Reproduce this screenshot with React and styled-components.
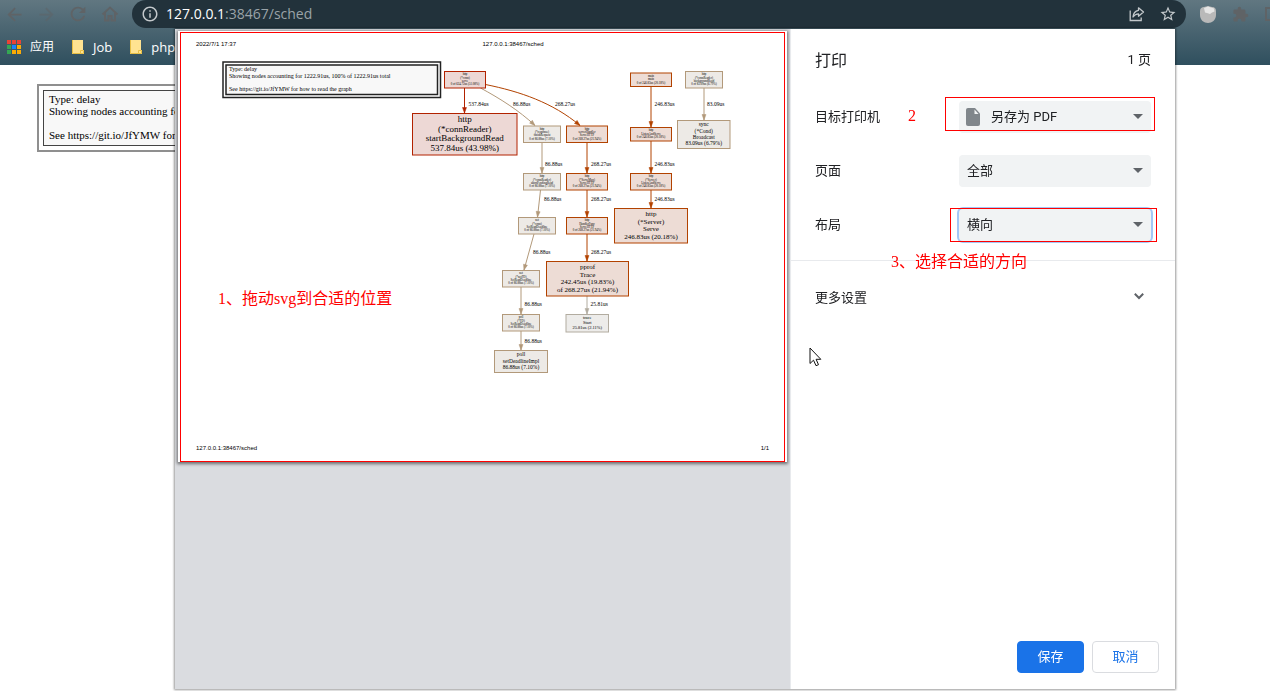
import { useState } from 'react';
import styled, { createGlobalStyle } from 'styled-components';
import { MdArrowBack, MdArrowForward, MdRefresh, MdInfoOutline, MdStarBorder, MdExtension } from 'react-icons/md';

const RED = '#b22200';
const ORANGE = '#b24200';
const TAN = '#b2997a';
const GREY = '#b2aca0';

const fills = {
  [RED]: '#edd8d5',
  [ORANGE]: '#eddcd5',
  [TAN]: '#edeae6',
  [GREY]: '#edecea'
}

// drawing units are half a pixel at the default preview size
const nodes = [
  { x: 889, y: 143, w: 82, h: 33, color: RED, size: 6, lines: ['http', '(*conn)', 'serve', '0 of 624.72us (51.08%)'] },
  { x: 825, y: 227, w: 209, h: 83, color: RED, size: 18, lines: ['http', '(*connReader)', 'startBackgroundRead', '537.84us (43.98%)'] },
  { x: 1047, y: 252, w: 74, h: 33, color: TAN, size: 6, lines: ['http', '(*response)', 'finishRequest', '0 of 86.88us (7.10%)'] },
  { x: 1133, y: 252, w: 82, h: 33, color: ORANGE, size: 6, lines: ['http', 'serverHandler', 'ServeHTTP', '0 of 268.27us (21.94%)'] },
  { x: 1261, y: 146, w: 82, h: 27, color: ORANGE, size: 6, lines: ['main', 'main', '0 of 246.83us (20.18%)'] },
  { x: 1371, y: 143, w: 74, h: 33, color: TAN, size: 6, lines: ['http', '(*connReader)', 'backgroundRead', '0 of 83.09us (6.79%)'] },
  { x: 1261, y: 255, w: 82, h: 27, color: ORANGE, size: 6, lines: ['http', 'ListenAndServe', '0 of 246.83us (20.18%)'] },
  { x: 1355, y: 241, w: 105, h: 56, color: TAN, size: 11, lines: ['sync', '(*Cond)', 'Broadcast', '83.09us (6.79%)'] },
  { x: 1047, y: 347, w: 74, h: 33, color: TAN, size: 6, lines: ['http', '(*connReader)', 'abortPendingRead', '0 of 86.88us (7.10%)'] },
  { x: 1133, y: 347, w: 82, h: 33, color: ORANGE, size: 6, lines: ['http', '(*ServeMux)', 'ServeHTTP', '0 of 268.27us (21.94%)'] },
  { x: 1261, y: 347, w: 82, h: 33, color: ORANGE, size: 6, lines: ['http', '(*Server)', 'ListenAndServe', '0 of 246.83us (20.18%)'] },
  { x: 1037, y: 435, w: 74, h: 33, color: TAN, size: 6, lines: ['net', '(*conn)', 'SetReadDeadline', '0 of 86.88us (7.10%)'] },
  { x: 1133, y: 435, w: 82, h: 33, color: ORANGE, size: 6, lines: ['http', 'HandlerFunc', 'ServeHTTP', '0 of 268.27us (21.94%)'] },
  { x: 1229, y: 417, w: 146, h: 69, color: ORANGE, size: 14, lines: ['http', '(*Server)', 'Serve', '246.83us (20.18%)'] },
  { x: 1005, y: 541, w: 74, h: 33, color: TAN, size: 6, lines: ['net', '(*netFD)', 'SetReadDeadline', '0 of 86.88us (7.10%)'] },
  { x: 1093, y: 523, w: 164, h: 69, color: ORANGE, size: 14, lines: ['pprof', 'Trace', '242.45us (19.83%)', 'of 268.27us (21.94%)'] },
  { x: 1005, y: 629, w: 74, h: 33, color: TAN, size: 6, lines: ['poll', '(*FD)', 'SetReadDeadline', '0 of 86.88us (7.10%)'] },
  { x: 1132, y: 629, w: 85, h: 35, color: GREY, size: 9, lines: ['trace', 'Start', '25.81us (2.11%)'] },
  { x: 989, y: 701, w: 106, h: 44, color: TAN, size: 11, lines: ['poll', 'setDeadlineImpl', '86.88us (7.10%)'] },
];

const edges = [
  { points: [[929, 176], [929, 226]], color: RED, label: '537.84us', at: [937, 208] },
  { points: [[961, 176], [1000, 197], [1038, 221], [1070, 251]], color: TAN, label: '86.88us', at: [1026, 208] },
  { points: [[971, 169], [1040, 183], [1105, 205], [1160, 251]], color: ORANGE, label: '268.27us', at: [1110, 208] },
  { points: [[1302, 173], [1302, 254]], color: ORANGE, label: '246.83us', at: [1309, 208] },
  { points: [[1408, 176], [1408, 240]], color: TAN, label: '83.09us', at: [1414, 208] },
  { points: [[1084, 285], [1084, 346]], color: TAN, label: '86.88us', at: [1090, 328] },
  { points: [[1174, 285], [1174, 346]], color: ORANGE, label: '268.27us', at: [1182, 328] },
  { points: [[1302, 282], [1302, 346]], color: ORANGE, label: '246.83us', at: [1309, 328] },
  { points: [[1081, 380], [1075, 434]], color: TAN, label: '86.88us', at: [1088, 398] },
  { points: [[1174, 380], [1174, 434]], color: ORANGE, label: '268.27us', at: [1182, 398] },
  { points: [[1302, 380], [1302, 416]], color: ORANGE, label: '246.83us', at: [1309, 398] },
  { points: [[1068, 468], [1048, 540]], color: TAN, label: '86.88us', at: [1066, 504] },
  { points: [[1174, 468], [1174, 522]], color: ORANGE, label: '268.27us', at: [1182, 504] },
  { points: [[1042, 574], [1042, 628]], color: TAN, label: '86.88us', at: [1049, 608] },
  { points: [[1174, 592], [1174, 628]], color: GREY, label: '25.81us', at: [1181, 608] },
  { points: [[1042, 662], [1042, 700]], color: TAN, label: '86.88us', at: [1049, 682] },
];

const Node = ({ x, y, w, h, color, size, lines }) => {
  const step = (h - 6) / lines.length;
  return (
    <g>
      <rect x={x} y={y} width={w} height={h} fill={fills[color]} stroke={color} strokeWidth="2" />
      {lines.map((line, i) => (
        <text key={i} x={x + w / 2} y={y + 2 + step * (i + 0.5) + size * 0.32} fontSize={size} textAnchor="middle">{line}</text>
      ))}
    </g>
  )
}

const Edge = ({ points, color, label, at }) => {
  const [ex, ey] = points[points.length - 1];
  const [px, py] = points[points.length - 2];
  const angle = Math.atan2(ey - py, ex - px) * 180 / Math.PI;
  const [start, ...rest] = points;
  return (
    <g>
      <path d={`M${start.join(',')}${rest.length > 1 ? 'C' : 'L'}${rest.map(p => p.join(',')).join(' ')}`} fill="none" stroke={color} strokeWidth="2" />
      <polygon points="0,0 -11,-4 -11,4" fill={color} stroke={color} transform={`translate(${ex} ${ey}) rotate(${angle})`} />
      <text x={at[0]} y={at[1] + 4} fontSize="11">{label}</text>
    </g>
  )
}

const CallGraph = () => (
  <Graph viewBox="356 114 1218 740" role="img" aria-label="sched">
    <rect x="446" y="124" width="435" height="71" fill="#fff" stroke="#222" strokeWidth="3" />
    <rect x="452" y="130" width="423" height="59" fill="#f8f8f8" stroke="#222" strokeWidth="3" />
    <text x="458" y="142" fontSize="12">Type: delay</text>
    <text x="458" y="156" fontSize="12">Showing nodes accounting for 1222.91us, 100% of 1222.91us total</text>
    <text x="458" y="182" fontSize="12">See https://git.io/JfYMW for how to read the graph</text>
    {edges.map((edge, i) => <Edge key={i} {...edge} />)}
    {nodes.map((node, i) => <Node key={i} {...node} />)}
  </Graph>
)

const HomeIcon = () => (
  <svg width="18" height="18" viewBox="0 0 18 18" fill="none" stroke="currentColor" strokeWidth="2">
    <path d="M1.500 9.500 9 2.500l7.500 7M4 8v7.500h3.500v-4.500h3v4.500H14V8" />
  </svg>
)

const ShareIcon = () => (
  <svg width="16" height="16" viewBox="0 0 16 16" fill="none" stroke="currentColor" strokeWidth="1.300">
    <path d="M1.200 4.500v10h11v-3" />
    <path d="M9.500 1.800 14.500 6l-5 4.200V7.800C7 7.800 5.400 8.800 4 11c.3-3.800 2.300-6.200 5.500-6.700z" strokeLinejoin="round" />
  </svg>
)

const BallIcon = () => (
  <svg width="16" height="17" viewBox="0 0 16 17">
    <path d="M0 5C0 2 2 1 4 1l4-1 4 1c3 0 4 2 4 4v4c0 5-4 8-8 8S0 14 0 9z" fill="#b9b9b9" />
    <path d="M4 2l4-1.500 3 1 3 1 .5 3-2.500 1-2 1.500-3-1-2-.5z" fill="#e6e6e6" />
  </svg>
)

const FileIcon = () => (
  <svg width="14" height="18" viewBox="0 0 14 18">
    <path d="M2 0h7l5 5.500V16a2 2 0 0 1-2 2H2a2 2 0 0 1-2-2V2a2 2 0 0 1 2-2z" fill="#80868b" />
    <path d="M8.500 1.500V6h4z" fill="#f1f3f4" />
  </svg>
)

const Folder = () => (
  <svg width="12" height="14" viewBox="0 0 12 14">
    <path d="M0 0h11v10h1v4H0z" fill="#ffe391" />
    <path d="M.5 0v13.500h8V10.500h3v3h-3" fill="none" stroke="#e8bf45" />
  </svg>
)

const dots = ['#ea4335', '#ea4335', '#ea4335', '#34a853', '#1a84ff', '#fbab05', '#34a853', '#fbab05', '#fbab05'];

const Apps = () => (
  <svg width="14" height="14" viewBox="0 0 14 14">
    {dots.map((color, i) => <rect key={i} x={(i % 3) * 5} y={Math.floor(i / 3) * 5} width="4" height="4" fill={color} />)}
  </svg>
)

function App() {

  const [printer, setPrinter] = useState('pdf');
  const [pages, setPages] = useState('all');
  const [layout, setLayout] = useState('landscape');

  return (
    <>
      <GlobalStyle />
      <Browser>
        <Toolbar>
          <NavButton aria-label="back"><MdArrowBack size={21} /></NavButton>
          <NavButton aria-label="forward" $dim><MdArrowForward size={21} /></NavButton>
          <NavButton aria-label="reload"><MdRefresh size={22} /></NavButton>
          <NavButton aria-label="home"><HomeIcon /></NavButton>
          <Address>
            <MdInfoOutline size={18} />
            <Url><b>127.0.0.1</b>:38467/sched</Url>
            <ShareIcon />
            <MdStarBorder size={18} />
          </Address>
          <Extensions>
            <BallIcon />
            <MdExtension size={17} />
            <svg width="14" height="14" viewBox="0 0 14 14"><path d="M1 1h12v12H1z" fill="none" stroke="currentColor" strokeWidth="2" /></svg>
          </Extensions>
        </Toolbar>
        <Bookmarks>
          <Bookmark href="#" $small><Apps />应用</Bookmark>
          <Bookmark href="#"><Folder />Job</Bookmark>
          <Bookmark href="#"><Folder />php</Bookmark>
        </Bookmarks>
      </Browser>
      <Page>
        <LegendFrame>
          <Legend>{'Type: delay\nShowing nodes accounting for 1222.91us\n\nSee https://git.io/JfYMW for how to'}</Legend>
        </LegendFrame>
      </Page>

      <Overlay>
        <Dialog role="dialog">
          <Preview>
            <Paper>
              <PaperHead><span>2022/7/1 17:37</span><span>127.0.0.1:38467/sched</span></PaperHead>
              <CallGraph />
              <PaperFoot><span>127.0.0.1:38467/sched</span><span>1/1</span></PaperFoot>
              <PaperMark />
              <PaperNote>1、拖动svg到合适的位置</PaperNote>
            </Paper>
          </Preview>

          <Settings>
            <TitleRow>
              <Title>打印</Title>
              <span>1 页</span>
            </TitleRow>
            <Row>
              <Label><label htmlFor="printer">目标打印机</label><Note>2</Note></Label>
              <Field>
                <FieldIcon><FileIcon /></FieldIcon>
                <Select id="printer" $icon value={printer} onChange={(e) => setPrinter(e.target.value)}>
                  <option value="pdf">另存为 PDF</option>
                </Select>
                <Arrow />
                <PrinterMark />
              </Field>
            </Row>
            <Row>
              <Label><label htmlFor="pages">页面</label></Label>
              <Field>
                <Select id="pages" value={pages} onChange={(e) => setPages(e.target.value)}>
                  <option value="all">全部</option>
                </Select>
                <Arrow />
              </Field>
            </Row>
            <Row>
              <Label><label htmlFor="layout">布局</label></Label>
              <Field>
                <Select id="layout" $active value={layout} onChange={(e) => setLayout(e.target.value)}>
                  <option value="landscape">横向</option>
                </Select>
                <Arrow />
                <LayoutMark />
              </Field>
              <LayoutNote>3、选择合适的方向</LayoutNote>
            </Row>
            <More>
              更多设置
              <svg width="10" height="7" viewBox="0 0 10 7" fill="none" stroke="#5f6368" strokeWidth="2"><path d="M.8.8 5 5 9.200.8" /></svg>
            </More>
            <Footer>
              <Button $primary>保存</Button>
              <Button>取消</Button>
            </Footer>
            <Cursor width="13" height="20" viewBox="0 0 13 20">
              <path d="M1 1v15.500l3.500-3.300 2.500 5.500 2.500-1-2.400-5.400h4.700z" fill="#fff" stroke="#111" />
            </Cursor>
          </Settings>
        </Dialog>
      </Overlay>
    </>
  );
}

const GlobalStyle = createGlobalStyle`
  * {
    box-sizing: border-box;
  }
  body {
    margin: 0;
    background: #fff;
    color: #202124;
    font-family: Roboto, "Noto Sans CJK SC", sans-serif;
    font-size: 13px;
    overflow: hidden;
  }
  svg {
    display: block;
    flex: none;
  }
`
const Browser = styled.header`
  background: linear-gradient(#617781, #2f4f5e);
  color: #5f6366;
  font-family: "Open Sans", "Noto Sans CJK SC", sans-serif;
`
const Toolbar = styled.div`
  display: flex;
  align-items: center;
  height: 28px;
`
const NavButton = styled.button`
  display: flex;
  align-items: center;
  justify-content: center;
  width: 32px;
  padding: 0 4px 0 0;
  border: none;
  background: none;
  color: inherit;
  opacity: ${({ $dim }) => $dim ? 0.5 : 1};
`
const Address = styled.div`
  display: flex;
  flex: 1;
  align-items: center;
  gap: 14px;
  height: 28px;
  margin-left: 4px;
  padding: 0 9px;
  border-radius: 14px;
  background: #22323b;
  color: #c3c8cb;
`
const Url = styled.span`
  flex: 1;
  margin-left: -7px;
  padding-bottom: 2px;
  color: #9aa3a8;
  font-size: 14px;

  b {
    color: #fff;
    font-weight: 400;
  }
`
const Extensions = styled.div`
  display: flex;
  align-items: center;
  gap: 16px;
  width: 84px;
  padding-left: 14px;
`
const Bookmarks = styled.nav`
  display: flex;
  align-items: center;
  gap: 18px;
  height: 37px;
  padding-left: 7px;
`
const Bookmark = styled.a`
  display: flex;
  align-items: center;
  gap: 9px;
  color: #fff;
  font-size: ${({ $small }) => $small ? 12 : 13}px;
  line-height: 18px;
  text-decoration: none;
`
const Page = styled.main`
  padding: 19px 37px;
`
const LegendFrame = styled.div`
  width: 400px;
  padding: 4px;
  border: 2px solid #8f8f8f;
`
const Legend = styled.pre`
  margin: 0;
  padding: 2px 5px 4px;
  border: 1px solid #444;
  background: #f8f8f8;
  color: #000;
  font-family: "Liberation Serif", serif;
  font-size: 11px;
  line-height: 12px;
`
const Overlay = styled.div`
  position: fixed;
  inset: 0;
  display: flex;
  padding: 29px 95px 2px 175px;
`
const Dialog = styled.section`
  display: flex;
  flex: 1;
  background: #fff;
  box-shadow: 0 0 2px 1px rgba(0, 0, 0, 0.4);
`
const Preview = styled.div`
  flex: 1;
  padding: 2px 3px;
  background: #dadce0;
`
const Paper = styled.div`
  position: relative;
  background: #fff;
  box-shadow: 0 1px 3px 1px rgba(0, 0, 0, 0.5);
  color: #000;
  font-family: "Liberation Sans", sans-serif;
  font-size: 6px;
  line-height: 8px;
`
const PaperHead = styled.div`
  display: grid;
  grid-template-columns: 1fr 1fr;
  padding: 9px 18px;
`
const PaperFoot = styled.div`
  display: flex;
  justify-content: space-between;
  padding: 17px 18px 11px;
  height: 35px;
`
const Graph = styled.svg`
  width: 100%;
  height: auto;
  font-family: "Liberation Serif", serif;
`
const Mark = styled.div`
  position: absolute;
  border: 1px solid #f00;
  pointer-events: none;
`
const PaperMark = styled(Mark)`
  inset: 1px 2px 0;
`
const PrinterMark = styled(Mark)`
  inset: -4px -4px 2px -14px;
`
const LayoutMark = styled(Mark)`
  inset: -1px -6px -1px -9px;
`
const Note = styled.span`
  color: #f00;
  font-family: "Liberation Serif", "Noto Sans CJK SC", serif;
  font-size: 16px;
  line-height: 20px;
  white-space: nowrap;
`
const PaperNote = styled(Note)`
  position: absolute;
  top: 258px;
  left: 40px;
`
const Settings = styled.div`
  position: relative;
  display: flex;
  flex-direction: column;
  width: 385px;
  border-left: 1px solid #e8eaed;
`
const TitleRow = styled.div`
  display: flex;
  align-items: center;
  justify-content: space-between;
  height: 61px;
  padding: 0 24px 2px;
`
const Title = styled.h1`
  margin: 0;
  font-size: 16px;
  font-weight: 400;
`
const Row = styled.div`
  position: relative;
  display: flex;
  align-items: center;
  justify-content: space-between;
  height: 54px;
  padding: 0 24px;
`
const Label = styled.div`
  display: flex;
  align-items: center;
  gap: 28px;
  padding-bottom: 3px;
`
const LayoutNote = styled(Note)`
  position: absolute;
  top: 54px;
  left: 100px;
`
const Field = styled.div`
  position: relative;
  width: 192px;
`
const FieldIcon = styled.span`
  position: absolute;
  top: 7px;
  left: 7px;
  pointer-events: none;
`
const Select = styled.select`
  display: block;
  appearance: none;
  width: 100%;
  height: 32px;
  padding: 0 24px 2px ${({ $icon }) => $icon ? 32 : 8}px;
  border: none;
  border-radius: 4px;
  outline: none;
  background: #f1f3f4;
  box-shadow: ${({ $active }) => $active ? '0 0 0 2px rgba(26, 115, 232, 0.4)' : 'none'};
  color: #202124;
  font: inherit;
`
const Arrow = styled.span`
  position: absolute;
  top: 13px;
  right: 8px;
  border: 5px solid transparent;
  border-top-color: #5f6368;
  border-bottom: none;
  pointer-events: none;
`
const More = styled.button`
  display: flex;
  align-items: center;
  justify-content: space-between;
  height: 73px;
  margin-top: 8px;
  padding: 0 31px 2px 24px;
  border: none;
  border-top: 1px solid #e8eaed;
  background: none;
  color: inherit;
  font: inherit;
`
const Footer = styled.div`
  display: flex;
  justify-content: flex-end;
  gap: 8px;
  margin-top: auto;
  padding: 16px;
`
const Button = styled.button`
  width: 67px;
  height: 32px;
  padding: 0 0 3px;
  border: 1px solid ${({ $primary }) => $primary ? '#1a73e8' : '#dadce0'};
  border-radius: 4px;
  background: ${({ $primary }) => $primary ? '#1a73e8' : '#fff'};
  color: ${({ $primary }) => $primary ? '#fff' : '#1a73e8'};
  font: inherit;
`
const Cursor = styled.svg`
  position: absolute;
  top: 318px;
  left: 18px;
`


export default App;
